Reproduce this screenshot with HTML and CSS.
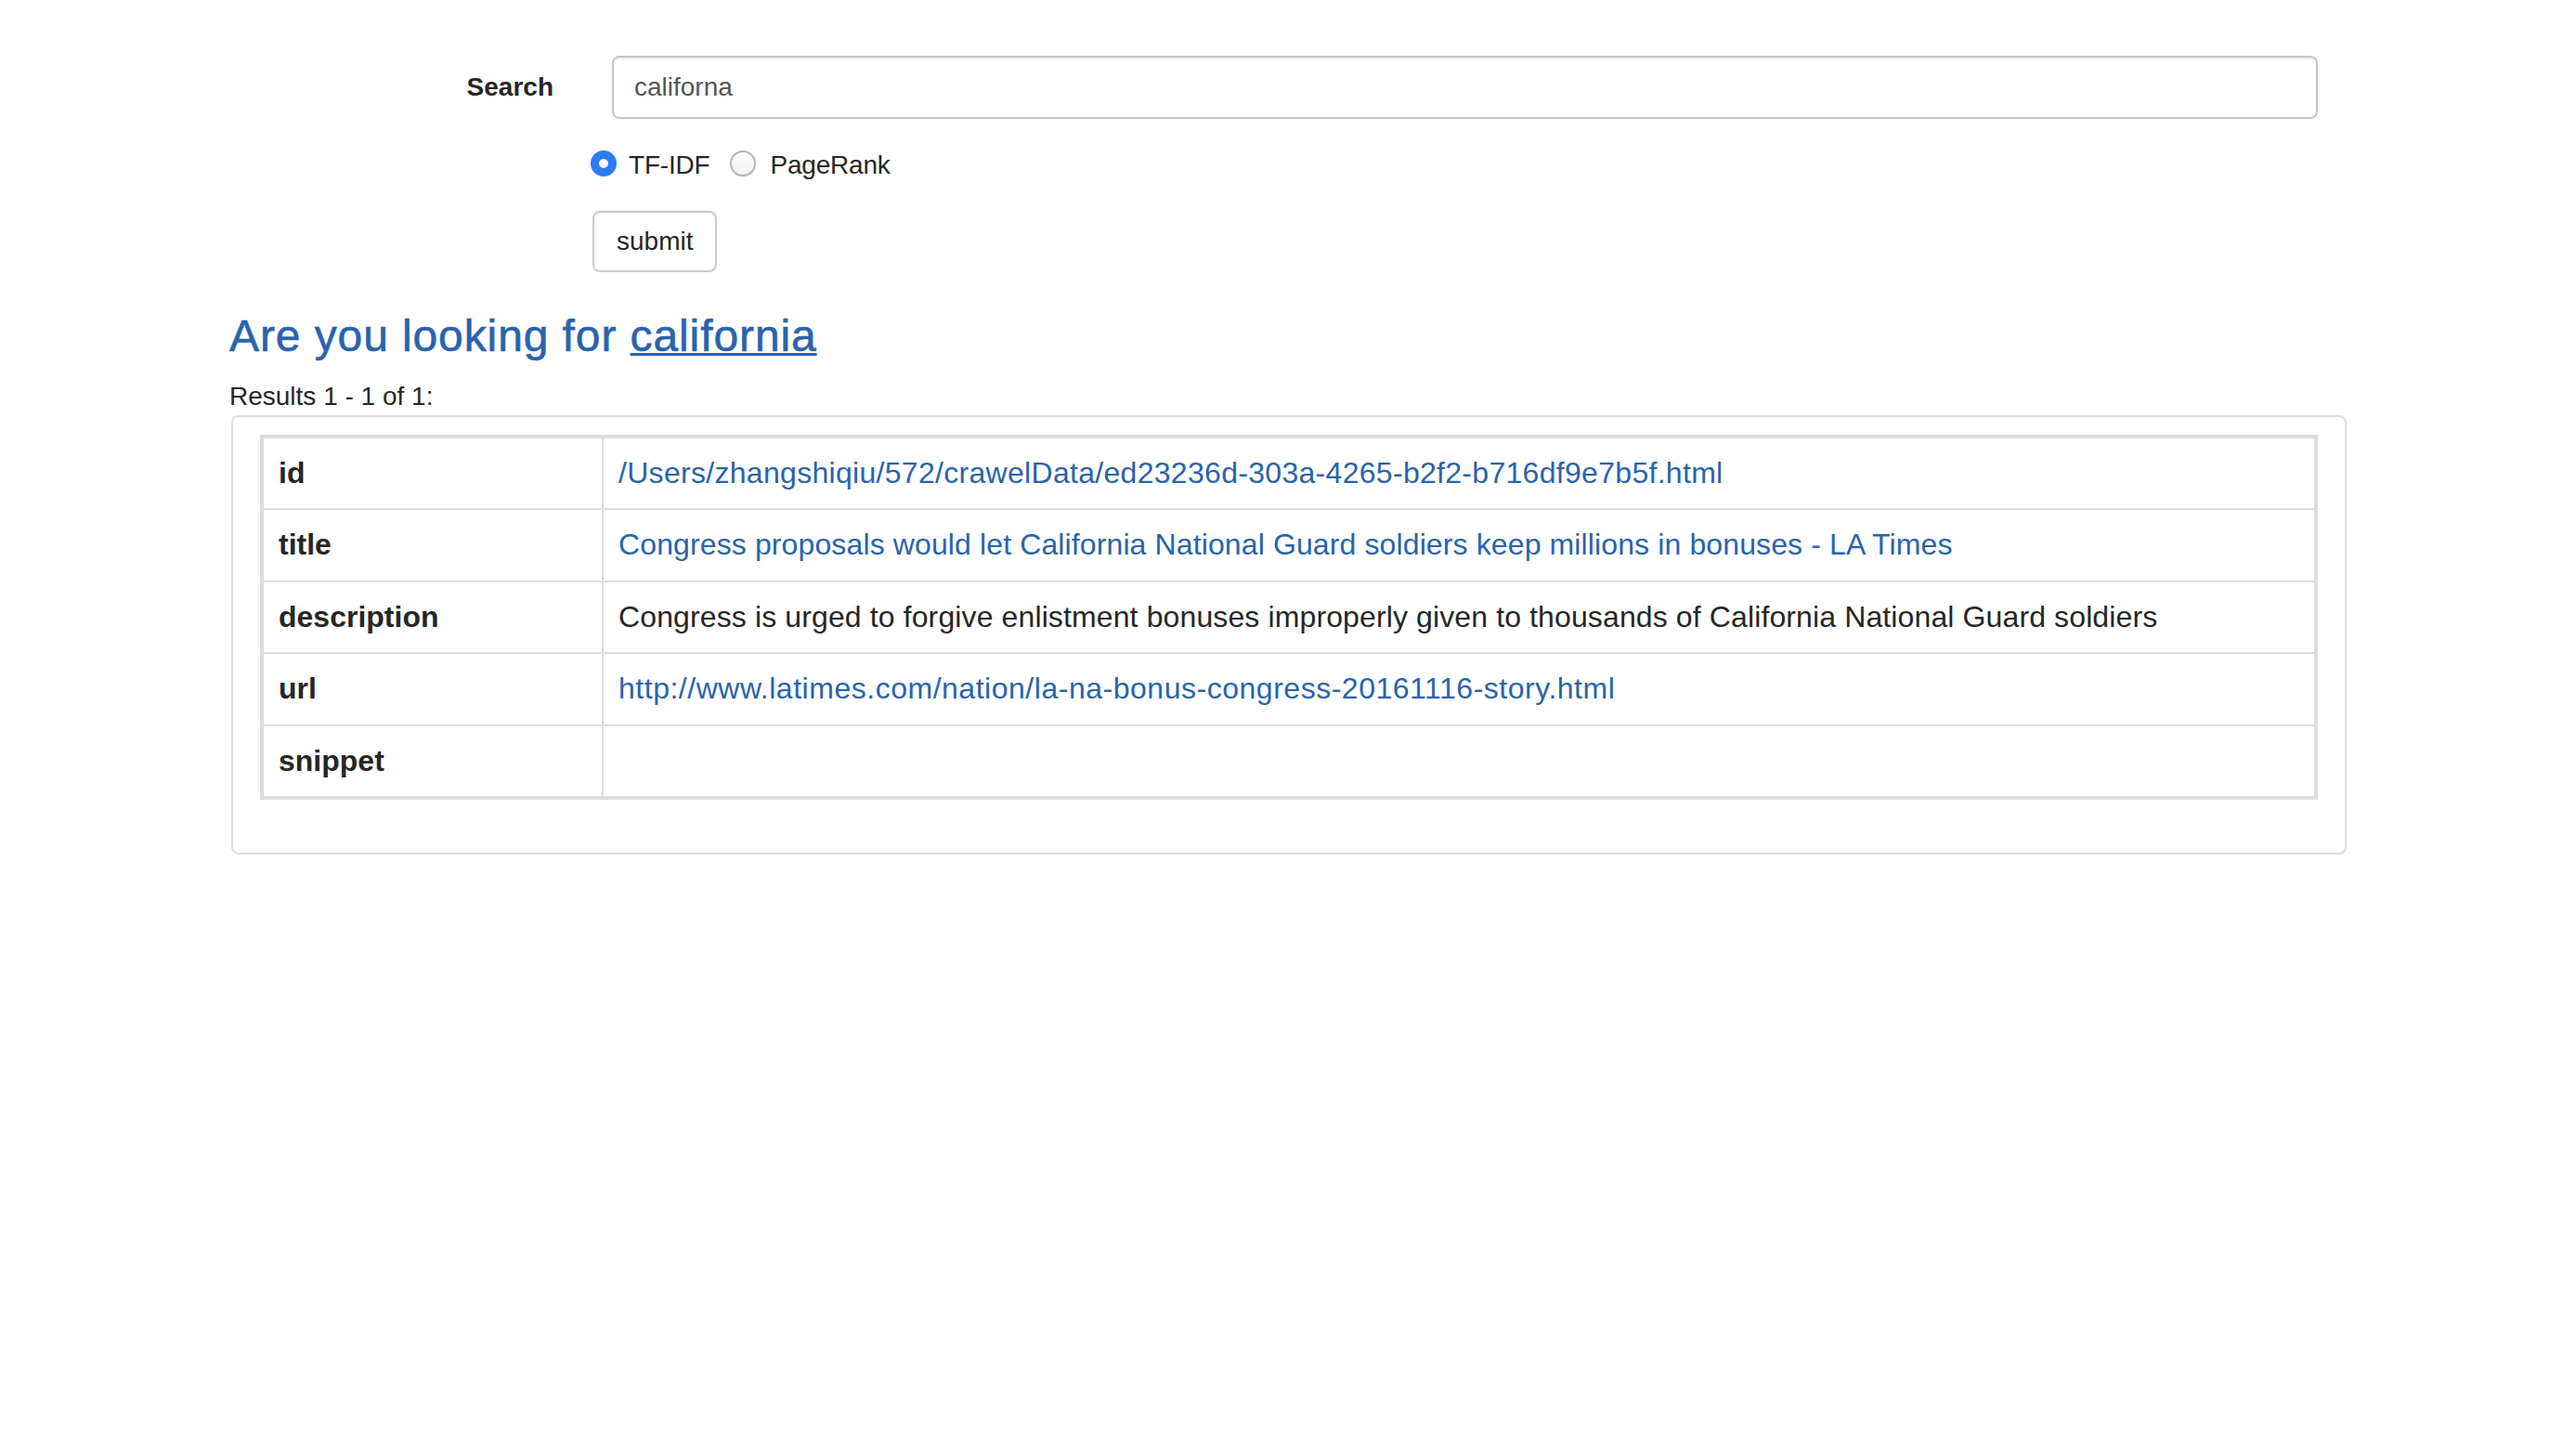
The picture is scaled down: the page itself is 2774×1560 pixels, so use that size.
FILE: index.html
```html
<!DOCTYPE html>
<html>
<head>
<meta charset="utf-8">
<title>Search</title>
<link rel="stylesheet" href="styles.css">
</head>
<body>
<div class="page">
  <form class="search-form">
    <div class="row-search">
      <label class="search-label" for="q">Search</label>
      <input class="search-input" id="q" type="text" value="californa">
    </div>
    <div class="row-radios">
      <label class="radio-opt"><input type="radio" name="algo" class="radio" checked><span class="radio-text">TF-IDF</span></label>
      <label class="radio-opt second"><input type="radio" name="algo" class="radio"><span class="radio-text">PageRank</span></label>
    </div>
    <div class="row-submit">
      <button type="button" class="btn">submit</button>
    </div>
  </form>

  <h3 class="suggest">Are you looking for <a href="#" class="suggest-link">california</a></h3>
  <div class="results-count">Results 1 - 1 of 1:</div>

  <div class="panel">
    <table class="result-table">
      <tbody>
        <tr><td class="key">id</td><td class="val"><a href="#" class="val-link path">/Users/zhangshiqiu/572/crawelData/ed23236d-303a-4265-b2f2-b716df9e7b5f.html</a></td></tr>
        <tr><td class="key">title</td><td class="val"><a href="#" class="val-link">Congress proposals would let California National Guard soldiers keep millions in bonuses - LA Times</a></td></tr>
        <tr><td class="key">description</td><td class="val">Congress is urged to forgive enlistment bonuses improperly given to thousands of California National Guard soldiers</td></tr>
        <tr><td class="key">url</td><td class="val"><a href="#" class="val-link web">http://www.latimes.com/nation/la-na-bonus-congress-20161116-story.html</a></td></tr>
        <tr><td class="key">snippet</td><td class="val"></td></tr>
      </tbody>
    </table>
  </div>
</div>
</body>
</html>
```

FILE: styles.css
```css
html, body {
  margin: 0;
  padding: 0;
  background: #ffffff;
}

body {
  font-family: "Liberation Sans", Arial, Helvetica, sans-serif;
  font-size: 28px;
  line-height: 40px;
  color: #262626;
}

.page {
  width: 2280px;
  padding: 60px 0 0 247px;
}

.search-form {
  margin: 0;
}

.row-search {
  display: flex;
  align-items: flex-start;
}

.search-label {
  width: 349px;
  flex: none;
  text-align: right;
  font-weight: bold;
  padding-top: 14px;
  line-height: 40px;
}

.search-input {
  flex: none;
  margin-left: 63px;
  width: 1837px;
  height: 68px;
  box-sizing: border-box;
  border: 2px solid #c6c6c6;
  border-radius: 8px;
  padding: 0 22px;
  font-family: "Liberation Sans", Arial, Helvetica, sans-serif;
  font-size: 28px;
  color: #555555;
  box-shadow: inset 0 2px 2px rgba(0, 0, 0, 0.075);
  outline: none;
  background: #ffffff;
}

.row-radios {
  display: flex;
  align-items: center;
  margin-top: 30px;
  margin-left: 389px;
  height: 40px;
}

.radio-opt {
  display: flex;
  align-items: center;
  height: 40px;
}

.radio-opt.second {
  margin-left: 22px;
}

.radio {
  appearance: none;
  -webkit-appearance: none;
  width: 28px;
  height: 28px;
  margin: 0 13px 4px 0;
  border-radius: 50%;
  box-sizing: border-box;
  border: 2px solid #b5b5b5;
  background: linear-gradient(#ffffff, #f1f1f1);
  box-shadow: 0 1px 1px rgba(0, 0, 0, 0.08);
  flex: none;
}

.radio:checked {
  border: 9px solid #2f7cf6;
  background: #ffffff;
  box-shadow: none;
}

.second .radio {
  margin-right: 15px;
}

.radio-text {
  letter-spacing: -0.2px;
}

.row-submit {
  margin-top: 29px;
  margin-left: 391px;
}

.btn {
  font-family: "Liberation Sans", Arial, Helvetica, sans-serif;
  font-size: 28px;
  line-height: 40px;
  color: #262626;
  background: #ffffff;
  border: 2px solid #cbcbcb;
  border-radius: 8px;
  padding: 11px 24px;
  margin: 0;
}

.suggest {
  margin: 43px 0 18px 0;
  font-size: 48px;
  line-height: 52.8px;
  font-weight: normal;
  letter-spacing: 0.9px;
  -webkit-text-stroke: 0.6px #2963ab;
  color: #2963ab;
}

.suggest-link {
  color: #2963ab;
  text-decoration: underline;
  text-decoration-thickness: 3px;
}

.results-count {
  line-height: 40px;
}

.panel {
  margin-left: 2px;
  width: 2278px;
  box-sizing: border-box;
  border: 2px solid #dddddd;
  border-radius: 8px;
  padding: 19px 29px 57px 29px;
}

.result-table {
  width: 2216px;
  table-layout: fixed;
  border-collapse: separate;
  border-spacing: 0;
  border: 2px solid #dddddd;
  font-size: 32px;
  line-height: 43.5px;
}

.result-table td {
  padding: 16px;
  border-right: 2px solid #dddddd;
  border-bottom: 2px solid #dddddd;
  vertical-align: top;
  white-space: nowrap;
}

.result-table tr:first-child td {
  border-top: 2px solid #dddddd;
}

.result-table td.key {
  border-left: 2px solid #dddddd;
  width: 368px;
  box-sizing: border-box;
  font-weight: bold;
}

.result-table td.val {
  letter-spacing: 0.12px;
}

.result-table tr:last-child td {
  height: 77.5px;
  box-sizing: border-box;
}

.val-link {
  color: #2963ab;
  text-decoration: none;
}

.val-link.path {
  letter-spacing: 0.3px;
}

.val-link.web {
  letter-spacing: 0.52px;
}
```
